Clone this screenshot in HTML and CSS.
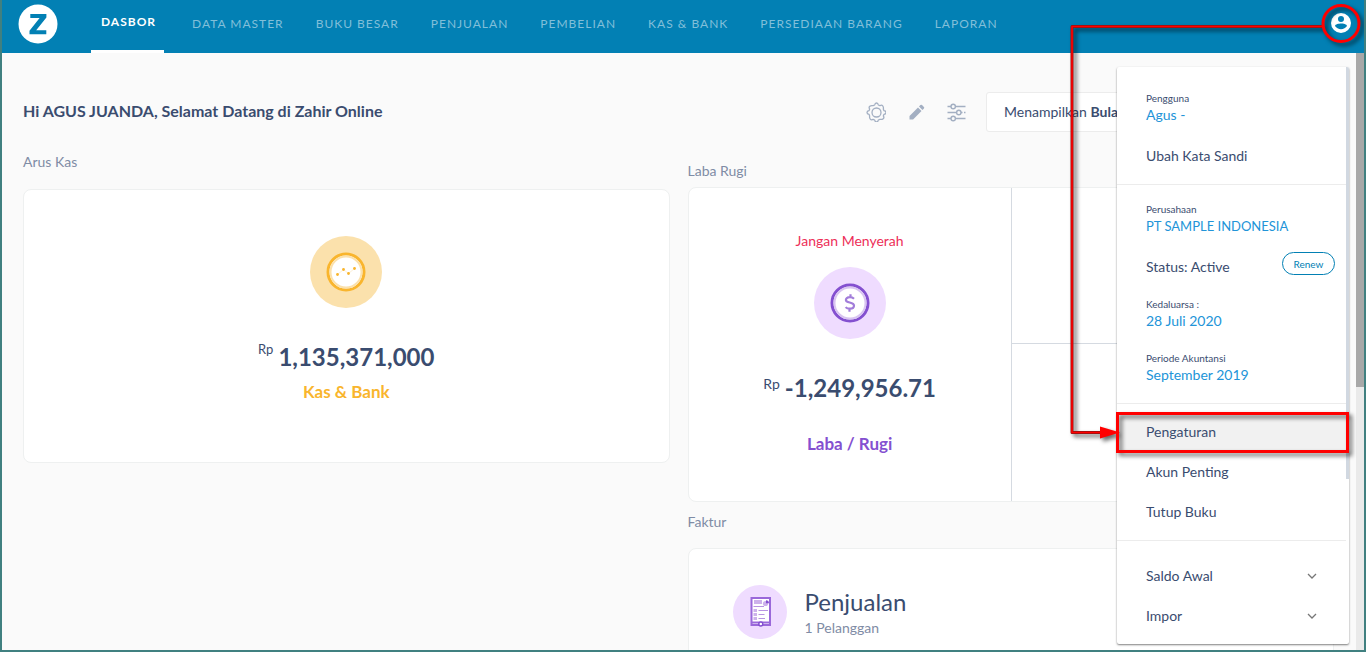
FILE: index.html
```html
<!DOCTYPE html>
<html lang="id">
<head>
<meta charset="utf-8">
<title>Zahir Online</title>
<link rel="stylesheet" href="styles.css">
</head>
<body>
<div class="app">
  <header class="topbar">
    <a class="brand" href="#" aria-label="Zahir"><svg viewBox="0 0 40 40" width="40" height="40"><circle cx="20" cy="20" r="19.500" fill="#fff"/><path d="M12.300 10H28.400V13.500L18.200 26.300H28.300V30.300H11.500V26.700L21.600 14H12.300Z" fill="#0280b4"/></svg></a>
    <nav class="nav">
      <a class="nav-link active" href="#">DASBOR</a>
      <a class="nav-link" href="#">DATA MASTER</a>
      <a class="nav-link" href="#">BUKU BESAR</a>
      <a class="nav-link" href="#">PENJUALAN</a>
      <a class="nav-link" href="#">PEMBELIAN</a>
      <a class="nav-link" href="#">KAS &amp; BANK</a>
      <a class="nav-link" href="#">PERSEDIAAN BARANG</a>
      <a class="nav-link" href="#">LAPORAN</a>
    </nav>
    <button class="account" type="button" aria-label="Akun"><svg viewBox="0 0 24 24" width="24" height="24"><path fill="#fff" d="M12 2a10 10 0 1 0 0 20 10 10 0 0 0 0-20zm0 3a3 3 0 1 1 0 6 3 3 0 0 1 0-6zm0 13.200c-2.500 0-4.700-1.200-6-3.200.03-2 4-2.600 6-2.600s5.970.6 6 2.600c-1.300 2-3.500 3.200-6 3.200z"/></svg></button>
  </header>
  <div class="viewport">
    <main class="content">
      <div class="heading">
        <h1>Hi AGUS JUANDA, Selamat Datang di Zahir Online</h1>
        <div class="tools">
          <button class="tool" type="button" aria-label="Pengaturan dasbor"><svg viewBox="0 0 20 20" width="20" height="20" fill="none" stroke="#a3afc2" stroke-width="1.300" stroke-linejoin="round"><circle cx="10.500" cy="10.500" r="4.500"/><path d="M8.700 3Q9 1 10.500 1T12.300 3L13.900 3.700Q15.600 2.500 16.700 3.800T17.300 7.100L18 8.700Q20 9 20 10.500T18 12.300L17.300 13.900Q18.500 15.600 17.200 16.700T13.900 17.300L12.300 18Q12 20 10.500 20T8.700 18L7.100 17.300Q5.400 18.500 4.300 17.200T3.700 13.900L3 12.300Q1 12 1 10.500T3 8.700L3.700 7.100Q2.500 5.400 3.800 4.300T7.100 3.700Z"/></svg></button>
          <button class="tool" type="button" aria-label="Ubah"><svg viewBox="0 0 20 20" width="20" height="20" fill="#a3afc2"><path d="M3.500 13.900 12 5.500l3.500 3.500-8.400 8.400H3.500zM13 4.500l1.400-1.400q.8-.8 1.600 0l1.900 1.900q.8.800 0 1.600L16.500 8z"/></svg></button>
          <button class="tool" type="button" aria-label="Filter"><svg viewBox="0 0 20 20" width="20" height="20" fill="none" stroke="#a3afc2" stroke-width="1.400"><path d="M1.500 4.500h3.500M9.500 4.500h10M1.500 10.500h9M15 10.500h1.500M18 10.500h1.500M1.500 16.500h3.500M9.500 16.500h10"/><circle cx="7.200" cy="4.500" r="2.200"/><circle cx="12.800" cy="10.500" r="2.200"/><circle cx="7.200" cy="16.500" r="2.200"/></svg></button>
          <button class="period" type="button">Menampilkan <b>Bulan Ini</b></button>
        </div>
      </div>
      <div class="columns">
        <section class="column">
          <h2 class="label">Arus Kas</h2>
          <article class="card cash">
            <svg class="badge" viewBox="0 0 72 72" width="72" height="72"><circle cx="36" cy="36" r="36" fill="#fbe1ac"/><circle cx="36" cy="36" r="18" fill="#fff" stroke="#f9b52d" stroke-width="3"/><circle cx="36" cy="36" r="15.500" fill="none" stroke="#fbe1ac" stroke-width="2"/><path d="M27.500 38.500 33.500 33.500 38.500 37.500 44.500 32.500" fill="none" stroke="#fdf0d6"/><g fill="#f9b52d"><circle cx="27.500" cy="38.500" r="1.400"/><circle cx="33.500" cy="33.500" r="1.400"/><circle cx="38.500" cy="37.500" r="1.400"/><circle cx="44.500" cy="32.500" r="1.400"/></g></svg>
            <p class="amount"><span class="currency small">Rp</span>1,135,371,000</p>
            <p class="caption gold">Kas &amp; Bank</p>
          </article>
        </section>
        <section class="column right">
          <h2 class="label">Laba Rugi</h2>
          <article class="card profit">
            <div class="result">
              <p class="note">Jangan Menyerah</p>
              <svg class="badge" viewBox="0 0 72 72" width="72" height="72"><circle cx="36" cy="36" r="36" fill="#efdcff"/><circle cx="36" cy="36" r="18" fill="#fff" stroke="#8450d0" stroke-width="3"/><circle cx="36" cy="36" r="15.500" fill="none" stroke="#d9c5f1" stroke-width="2"/><path d="M40 31.700Q38.500 30.200 36 30.200C33 30.200 31.900 31.600 31.900 33 31.900 36.500 40 34.500 40 38.600 40 40.700 38.400 41.700 36 41.700Q33 41.700 31.600 40.100M36.500 27.200V30M35.500 42V44.800" fill="none" stroke="#a27dda" stroke-width="2.200"/></svg>
              <p class="amount"><span class="currency">Rp</span>-1,249,956.71</p>
              <p class="caption violet">Laba / Rugi</p>
            </div>
            <div class="breakdown"><div></div><div></div></div>
          </article>
          <h2 class="label invoices">Faktur</h2>
          <article class="card sales">
            <svg viewBox="0 0 54 54" width="54" height="54"><circle cx="27" cy="27" r="27" fill="#efdcff"/><path d="M18.500 13H37V40H18.500Z" fill="#fff" stroke="#9a68da" stroke-width="2"/><path d="M18 37.500H37" stroke="#9a68da" stroke-width="2"/><path d="M21 15H29V19H21ZM20.500 24H24V27H20.500ZM20.500 28H24V31H20.500ZM20.500 32H24V35H20.500Z" fill="#cdb2eb"/><path d="M20.500 21.500H31M25.500 25.500H35M25.500 29.500H31.500M25.500 33.500H32" stroke="#b894e2"/><circle cx="32.500" cy="18.500" r="2.600" fill="#cdb2eb"/><path d="M33 15.200A3 3 0 0 1 36 18.200H33Z" fill="#8450d0"/><circle cx="27.800" cy="39" r="2" fill="#fff" stroke="#8450d0" stroke-width="1.500"/></svg>
            <div><h3>Penjualan</h3><p>1 Pelanggan</p></div>
          </article>
        </section>
      </div>
    </main>
    <div class="scroll-track"><div class="scroll-thumb"></div></div>
  </div>
  <aside class="menu">
    <div class="menu-group user">
      <div class="field"><small>Pengguna</small><a href="#">Agus -</a></div>
      <button class="item" type="button">Ubah Kata Sandi</button>
    </div>
    <div class="menu-group company">
      <div class="field"><small>Perusahaan</small><a class="company-name" href="#">PT SAMPLE INDONESIA</a></div>
      <div class="status"><span>Status: Active</span><button class="renew" type="button">Renew</button></div>
      <div class="field"><small>Kedaluarsa :</small><a href="#">28 Juli 2020</a></div>
      <div class="field"><small>Periode Akuntansi</small><a href="#">September 2019</a></div>
    </div>
    <div class="menu-group actions">
      <button class="item selected" type="button">Pengaturan</button>
      <button class="item" type="button">Akun Penting</button>
      <button class="item" type="button">Tutup Buku</button>
    </div>
    <div class="menu-group more">
      <button class="item" type="button">Saldo Awal<svg viewBox="0 0 10 6" width="10" height="6"><path d="M1 1 5 5 9 1" fill="none" stroke="#777" stroke-width="1.300"/></svg></button>
      <button class="item" type="button">Impor<svg viewBox="0 0 10 6" width="10" height="6"><path d="M1 1 5 5 9 1" fill="none" stroke="#777" stroke-width="1.300"/></svg></button>
    </div>
    <div class="menu-thumb"></div>
  </aside>
  <svg class="callout" viewBox="0 0 306 470" width="306" height="470" aria-hidden="true">
    <g fill="none" stroke-linejoin="round">
      <path d="M263 26.500H12V432.500H42" stroke="#8c1414" stroke-width="3"/>
      <path d="M263 26.500H12V432.500H42" stroke="#f00" stroke-width="1.600"/>
      <circle cx="281" cy="23.500" r="18" stroke="#f00" stroke-width="3"/>
      <path d="M57.500 413.500H287.500V451.500H57.500Z" stroke="#f00" stroke-width="3" stroke-linejoin="miter"/>
    </g>
    <path d="M40 426.500 60 432.500 40 438.500Z" fill="#f00"/>
  </svg>
</div>
</body>
</html>
```
FILE: styles.css
```css
* { box-sizing: border-box; }
body, h1, h2, h3, p { margin: 0; }
body { font-family: Lato, sans-serif; font-size: 14px; line-height: 18px; color: #3a4c6f; }
button { font: inherit; color: inherit; background: none; border: 0; padding: 0; text-align: left; }
a { text-decoration: none; }
svg { display: block; flex: none; }

.app { position: relative; height: 100vh; display: flex; flex-direction: column; overflow: hidden; border: 2px solid #408080; border-top: 0; background: #fafafa; }

.topbar { flex: none; height: 53px; display: flex; background: #0280b4; }
.brand { margin: 4px 33px 0 16px; }
.nav { display: flex; gap: 12px; }
.nav-link { padding: 15px 10px 0; font-size: 12px; letter-spacing: 1px; color: #81bfd9; white-space: nowrap; }
.nav-link.active { margin-right: 6px; padding: 13px 8px 0 10px; font-weight: 700; color: #fff; border-bottom: 3px solid #fff; }
.account { margin: 11px 11px 0 auto; align-self: flex-start; }

.viewport { flex: 1; min-height: 0; display: flex; }
.content { flex: 1; min-width: 0; padding: 39px 22px 0 21px; }
.heading { display: flex; justify-content: space-between; height: 40px; align-items: center; }
h1 { padding-bottom: 2px; font-size: 16px; line-height: 20px; font-weight: 700; }
.tools { display: flex; align-items: center; gap: 20px; }
.period { width: 348px; height: 40px; padding: 0 17px; background: #fff; border: 1px solid #ececec; border-radius: 3px; }
.columns { display: grid; grid-template-columns: 1fr 1fr; gap: 18px; }
.column { padding-top: 21px; }
.column.right { padding-top: 30px; }
.label { font-size: 14px; line-height: 18px; font-weight: 400; color: #7f8ca5; }
.card { background: #fff; border: 1px solid #eef0f0; border-radius: 8px; }
.cash { margin-top: 18px; height: 274px; padding-top: 46px; text-align: center; }
.badge { margin: 0 auto; }
.amount { margin-top: 35px; font-size: 24px; line-height: 28px; font-weight: 700; }
.currency { margin-right: 5px; font-size: 14px; font-weight: 400; vertical-align: 8px; line-height: 1; }
.currency.small { font-size: 13px; vertical-align: 12px; line-height: 0; }
.caption { margin-top: 11px; font-size: 17px; line-height: 20px; font-weight: 700; }
.gold { color: #f9b52d; }
.violet { margin-top: 32px; color: #8450d0; }
.profit { margin-top: 7px; height: 315px; display: grid; grid-template-columns: 1fr 1fr; }
.result { padding-top: 44px; text-align: center; }
.note { margin-bottom: 17px; color: #ed2f59; }
.breakdown { display: grid; grid-template-rows: 155px 1fr; border-left: 1px solid #d5dae1; }
.breakdown div + div { border-top: 1px solid #d5dae1; }
.invoices { margin-top: 11px; }
.sales { margin-top: 17px; height: 160px; padding: 36px 44px; display: flex; gap: 18px; }
.sales h3 { margin-top: 4px; font-size: 24px; line-height: 26px; font-weight: 400; }
.sales p { margin-top: 4px; color: #7f8ca5; }
.scroll-track { width: 8px; background: #eaeaea; }
.scroll-thumb { height: 56%; background: #a8a8a8; }

.menu { position: absolute; top: 67px; right: 15px; width: 232px; height: 577px; overflow: hidden; background: #fff; border-radius: 2px; box-shadow: 0 1px 2px rgba(0, 0, 0, .5); }
.menu-group { margin-right: 3px; border-bottom: 1px solid #ececec; }
.field { display: grid; padding-left: 29px; }
.field small { font-size: 10px; line-height: 14px; }
.field a { line-height: 20px; color: #2294d8; }
.field .company-name { font-size: 13px; }
.item { display: flex; width: 100%; height: 40px; align-items: center; justify-content: space-between; padding: 0 29px; }
.user { padding: 24px 0 8px; }
.user .item { margin-top: 11px; }
.company { display: grid; gap: 20px; padding: 17px 0 18px; }
.status { display: flex; justify-content: space-between; align-items: center; height: 29px; margin: -4px 11px -4px 29px; }
.renew { align-self: flex-start; width: 53px; height: 23px; border: 1px solid #0280b4; border-radius: 12px; font-size: 10px; line-height: 14px; text-align: center; color: #0280b4; }
.actions { padding: 8px 0; }
.selected { background: #f1f1f1; }
.more { padding-top: 15px; border-bottom: 0; }
.menu-thumb { position: absolute; top: 0; right: 0; width: 3px; height: 412px; background: #d1d8e1; }
.callout { position: absolute; top: 0; right: -2px; filter: drop-shadow(3px 3px 2px rgba(0, 0, 0, .6)); pointer-events: none; }
```
